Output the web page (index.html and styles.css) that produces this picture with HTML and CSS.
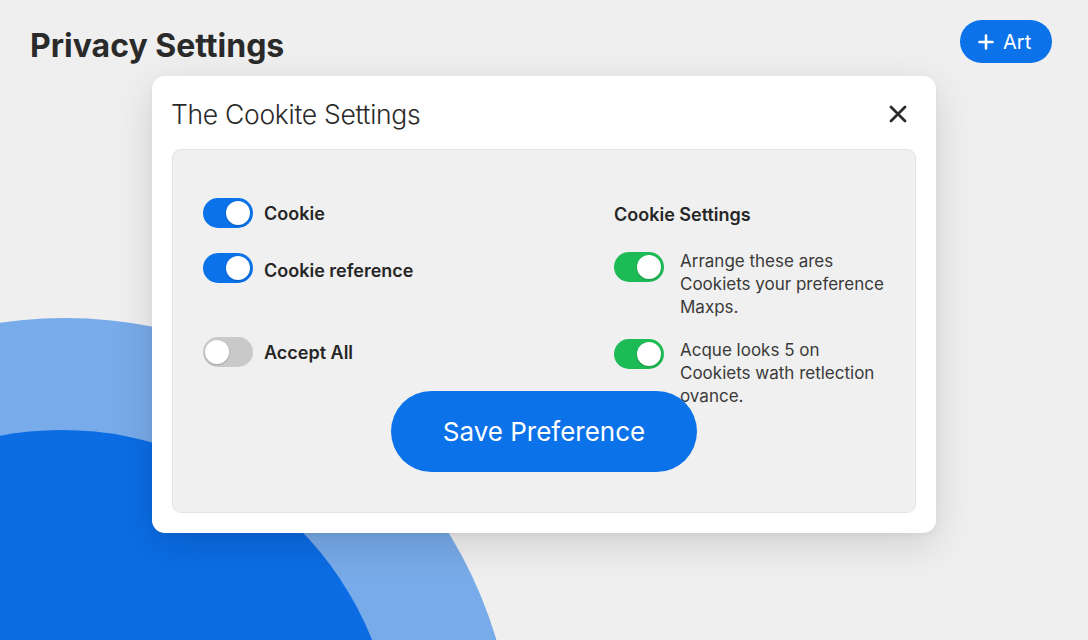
FILE: index.html
```html
<!DOCTYPE html>
<html>
<head>
<meta charset="utf-8">
<link rel="stylesheet" href="styles.css">
</head>
<body>
<div class="page">
  <div class="blob blob-light"></div>
  <div class="blob blob-dark"></div>
  <header class="topbar">
    <h1 class="page-title">Privacy Settings</h1>
    <button class="add-btn"><svg class="plus" viewBox="0 0 16 16" width="16" height="16"><path d="M8 1.5v13M1.5 8h13" stroke="#fff" stroke-width="2.6" stroke-linecap="round"/></svg><span>Art</span></button>
  </header>
  <section class="modal">
    <div class="modal-head">
      <h2 class="modal-title">The Cookite Settings</h2>
      <svg class="close" viewBox="0 0 18 18" width="18" height="18"><path d="M2 2l14 14M16 2L2 16" stroke="#2b2b2b" stroke-width="2.8" stroke-linecap="round"/></svg>
    </div>
    <div class="panel">
      <div class="col col-left">
        <div class="opt opt-1"><span class="toggle on"><span class="knob"></span></span><span class="opt-label">Cookie</span></div>
        <div class="opt opt-2"><span class="toggle on"><span class="knob"></span></span><span class="opt-label">Cookie reference</span></div>
        <div class="opt opt-3"><span class="toggle off"><span class="knob"></span></span><span class="opt-label">Accept All</span></div>
      </div>
      <div class="col col-right">
        <h3 class="col-head">Cookie Settings</h3>
        <div class="desc desc-1"><span class="toggle green"><span class="knob"></span></span><p class="desc-text">Arrange these ares<br>Cookiets your preference<br>Maxps.</p></div>
        <div class="desc desc-2"><span class="toggle green"><span class="knob"></span></span><p class="desc-text">Acque looks 5 on<br>Cookiets wath retlection<br>ovance.</p></div>
      </div>
      <button class="save-btn">Save Preference</button>
    </div>
  </section>
</div>
</body>
</html>
```
FILE: styles.css
```css
* { box-sizing: border-box; }
html, body { margin: 0; padding: 0; }
body {
  width: 1088px;
  height: 640px;
  overflow: hidden;
  background: #efefef;
  font-family: Inter, "Noto Sans", "Liberation Sans", sans-serif;
  color: #262626;
}
.page {
  position: relative;
  width: 1088px;
  height: 640px;
  overflow: hidden;
}
.blob {
  position: absolute;
  border-radius: 50%;
}
.blob-light {
  left: -385px;
  top: 318px;
  width: 900px;
  height: 900px;
  background: #78abe9;
}
.blob-dark {
  left: -272px;
  top: 430px;
  width: 668px;
  height: 668px;
  background: #0b6ce4;
}
.topbar {
  position: relative;
  display: flex;
  justify-content: space-between;
  align-items: flex-start;
  padding: 20px 36px 0 30px;
  height: 76px;
}
.page-title {
  margin: 7px 0 0 0;
  font-size: 32px;
  font-weight: 700;
  letter-spacing: 0;
  color: #2a2a2a;
  line-height: 38px;
}
.add-btn {
  display: flex;
  align-items: center;
  gap: 9px;
  height: 43px;
  width: 92px;
  padding: 0 0 0 18px;
  border: none;
  border-radius: 22px;
  background: #0b72ea;
  color: #fff;
  font-family: Inter, "Noto Sans", sans-serif;
  font-size: 20px;
  font-weight: 400;
}
.modal {
  position: relative;
  margin-left: 152px;
  width: 784px;
  height: 457px;
  background: #fff;
  border-radius: 13px;
  box-shadow: 0 12px 40px rgba(0,0,0,0.13), 0 2px 6px rgba(0,0,0,0.05);
  padding: 0 20px 20px 20px;
  display: flex;
  flex-direction: column;
}
.modal-head {
  height: 73px;
  display: flex;
  align-items: center;
  justify-content: space-between;
  padding: 0 9px 0 0;
}
.modal-title {
  margin: 2px 0 0 -1px;
  font-size: 26.5px;
  font-weight: 300;
  letter-spacing: -0.3px;
  color: #2a2a2a;
}
.close { margin-top: 2px; }
.panel {
  position: relative;
  flex: 1;
  background: #f0f0f0;
  border: 1px solid #e3e3e3;
  border-radius: 9px;
  display: flex;
  padding: 48px 0 0 30px;
}
.col { display: flex; flex-direction: column; }
.col-left { width: 411px; }
.opt {
  display: flex;
  align-items: center;
  gap: 11px;
  height: 30px;
}
.opt-2 { margin-top: 25px; }
.opt-3 { margin-top: 54px; }
.opt-label {
  font-size: 18px;
  font-weight: 600;
  color: #262626;
}
.opt-2 .opt-label { margin-top: 4px; }
.toggle {
  position: relative;
  display: inline-block;
  width: 50px;
  height: 30px;
  border-radius: 15px;
  flex: none;
}
.toggle .knob {
  position: absolute;
  top: 3px;
  width: 24px;
  height: 24px;
  border-radius: 50%;
  background: #fff;
  box-shadow: 0 1px 2px rgba(0,0,0,0.2);
}
.toggle.on { background: #0b72ea; }
.toggle.green { background: #1dbb55; }
.toggle.on .knob, .toggle.green .knob { right: 3px; }
.toggle.off { background: #c9c9c9; }
.toggle.off .knob { left: 2px; }
.col-head {
  margin: 6px 0 0 0;
  font-size: 18px;
  font-weight: 600;
  line-height: 22px;
  color: #262626;
}
.desc {
  display: flex;
  align-items: flex-start;
  gap: 16px;
}
.desc-1 { margin-top: 26px; }
.desc-1 .desc-text { margin-top: -2px; }
.desc-2 { margin-top: 20px; }
.desc-text {
  margin: 0;
  font-size: 17px;
  line-height: 23px;
  font-weight: 400;
  color: #3a3a3a;
}
.save-btn {
  position: absolute;
  left: 218px;
  top: 241px;
  width: 306px;
  height: 81px;
  border: none;
  border-radius: 41px;
  background: #0b72ea;
  color: #fff;
  font-family: Inter, "Noto Sans", sans-serif;
  font-size: 26px;
  font-weight: 400;
}
```
